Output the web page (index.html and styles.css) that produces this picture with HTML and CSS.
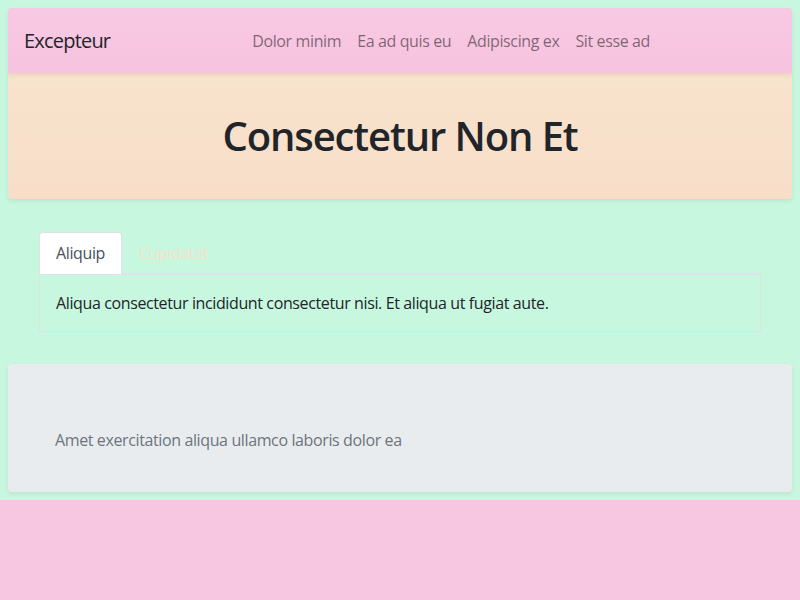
FILE: index.html
```html
<!DOCTYPE html>
<html lang="en">
<head>
<meta charset="utf-8">
<title>Excepteur</title>
<link rel="stylesheet" href="styles.css">
</head>
<body>
<div class="page">
  <nav class="navbar">
    <a class="brand" href="#">Excepteur</a>
    <ul class="nav-links">
      <li><a href="#">Dolor minim</a></li>
      <li><a href="#">Ea ad quis eu</a></li>
      <li><a href="#">Adipiscing ex</a></li>
      <li><a href="#">Sit esse ad</a></li>
    </ul>
  </nav>
  <header class="hero">
    <h1>Consectetur Non Et</h1>
  </header>
  <section class="tabs-section">
    <ul class="tabs">
      <li class="tab active">Aliquip</li>
      <li class="tab muted">Cupidatat</li>
    </ul>
    <div class="tab-pane">
      <p>Aliqua consectetur incididunt consectetur nisi. Et aliqua ut fugiat aute.</p>
    </div>
  </section>
  <section class="card">
    <p>Amet exercitation aliqua ullamco laboris dolor ea</p>
  </section>
</div>
<footer class="footer"></footer>
</body>
</html>
```

FILE: styles.css
```css
* { box-sizing: border-box; }
html, body { margin: 0; padding: 0; }
body {
  background: #c8f7e0;
  font-family: "Open Sans", "Noto Sans", sans-serif;
  color: #212529;
  font-size: 16px;
  line-height: 1.5;
  letter-spacing: -0.38px;
}
.page {
  padding: 8px 8px 8px 8px;
}
.navbar {
  display: flex;
  align-items: center;
  height: 65px;
  padding: 0 16px;
  background: linear-gradient(#f8c9e3, #f7c3df);
  border-radius: 4px 4px 0 0;
  box-shadow: 0 2px 4px rgba(0,0,0,0.08);
  position: relative;
  z-index: 2;
}
.brand {
  font-size: 20px;
  color: #212529;
  text-decoration: none;
  letter-spacing: -0.8px;
}
.nav-links {
  list-style: none;
  display: flex;
  margin: 0 0 0 134px;
  padding: 0;
}
.nav-links a {
  display: block;
  padding: 8px 8px;
  color: rgba(0,0,0,0.5);
  text-decoration: none;
  font-size: 16px;
}
.hero {
  height: 126px;
  display: flex;
  align-items: center;
  justify-content: center;
  background: linear-gradient(#f8e3cd, #f8dec8);
  border-radius: 0 0 4px 4px;
  box-shadow: 0 2px 4px rgba(0,0,0,0.08);
}
.hero h1 {
  margin: 0;
  font-size: 40px;
  font-weight: 600;
  line-height: 1.2;
  letter-spacing: -1.1px;
}
.tabs-section {
  margin: 33px 31px 0 31px;
}
.tabs {
  list-style: none;
  display: flex;
  margin: 0;
  padding: 0;
  border-bottom: 1px solid #dee2e6;
}
.tab {
  padding: 8px 16px;
  border: 1px solid transparent;
  border-radius: 4px 4px 0 0;
  margin-bottom: -1px;
}
.tab.active {
  background: #fff;
  border-color: #dee2e6 #dee2e6 #fff;
  color: #495057;
}
.tab.muted {
  color: #f8dfcc;
}
.tab-pane {
  border: 1px solid #dee2e6;
  padding: 16px;
}
.tab-pane p { margin: 0; }
.card {
  margin-top: 32px;
  height: 128px;
  background: #e9ecef;
  border-radius: 4px;
  box-shadow: 0 2px 4px rgba(0,0,0,0.08);
  padding: 64px 47px 0;
  color: #6c757d;
}
.card p { margin: 0; }
.footer {
  height: 100px;
  background: #f7c6e0;
}
```
